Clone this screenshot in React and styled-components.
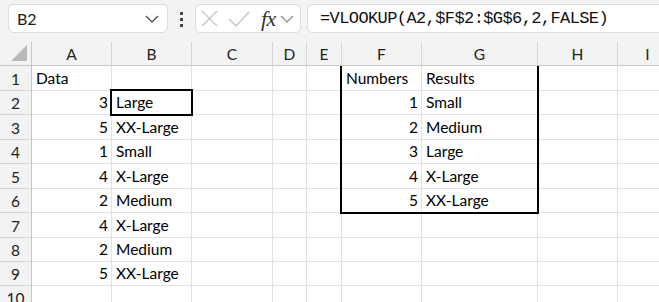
import React from 'react';
import styled, { createGlobalStyle } from 'styled-components';

const GlobalStyle = createGlobalStyle`
    html, body {
        margin: 0;
        padding: 0;
        background: #ffffff;
        overflow: hidden;
    }
    body {
        font-family: Lato, "Noto Sans", sans-serif;
        color: #000;
    }
`;

const COLS = [
    { key: 'A', width: 80 },
    { key: 'B', width: 80 },
    { key: 'C', width: 81 },
    { key: 'D', width: 34 },
    { key: 'E', width: 35 },
    { key: 'F', width: 80 },
    { key: 'G', width: 116 },
    { key: 'H', width: 80 },
    { key: 'I', width: 60 },
];

const ROW_HEIGHTS = [25, 24, 25, 24, 25, 24, 25, 24, 24, 24];

const DATA = {
    1: { A: 'Data', F: 'Numbers', G: 'Results' },
    2: { A: 3, B: 'Large', F: 1, G: 'Small' },
    3: { A: 5, B: 'XX-Large', F: 2, G: 'Medium' },
    4: { A: 1, B: 'Small', F: 3, G: 'Large' },
    5: { A: 4, B: 'X-Large', F: 4, G: 'X-Large' },
    6: { A: 2, B: 'Medium', F: 5, G: 'XX-Large' },
    7: { A: 4, B: 'X-Large' },
    8: { A: 2, B: 'Medium' },
    9: { A: 5, B: 'XX-Large' },
};

const Page = styled.div`
    width: 659px;
    height: 302px;
    display: flex;
    flex-direction: column;
    overflow: hidden;
`;

const Toolbar = styled.div`
    height: 42px;
    flex: none;
    background: #f3f3f3;
    display: flex;
    align-items: flex-start;
    padding: 4px 0 0 8px;
    box-sizing: border-box;
`;

const Box = styled.div`
    height: 29px;
    box-sizing: border-box;
    background: #fff;
    border: 1px solid #dcdcdc;
    border-radius: 5px;
    display: flex;
    align-items: center;
`;

const NameBox = styled(Box)`
    width: 160px;
    padding: 0 8px 0 8px;
    justify-content: space-between;
    font-size: 16px;
    color: #1a1a1a;
`;

const Dots = styled.div`
    width: 27px;
    display: flex;
    flex-direction: column;
    align-items: center;
    gap: 3px;
    padding-top: 8px;
    span {
        width: 3px;
        height: 3px;
        background: #444;
    }
`;

const FxBox = styled(Box)`
    width: 106px;
    padding: 0 0 0 5px;
    gap: 10px;
    .fx {
        font-family: "Liberation Serif", serif;
        font-style: italic;
        font-size: 22px;
        color: #333;
        margin-left: 1px;
        margin-right: -6px;
        line-height: 1;
        letter-spacing: -0.5px;
    }
`;

const FormulaBox = styled(Box)`
    flex: 1;
    margin-left: 6px;
    border-right: none;
    border-radius: 5px 0 0 5px;
    padding-left: 12px;
    font-family: "Liberation Mono", monospace;
    font-size: 17px;
    letter-spacing: -0.6px;
    color: #111;
    white-space: nowrap;
`;

const Sheet = styled.div`
    display: grid;
    grid-template-columns: 32px ${COLS.map((c) => c.width + 'px').join(' ')};
    grid-template-rows: 24px ${ROW_HEIGHTS.map((h) => h + 'px').join(' ')};
    font-size: 15.5px;
`;

const Placed = styled.div`
    grid-column: ${(p) => p.$c};
    grid-row: ${(p) => p.$r};
`;

const HeadCell = styled(Placed)`
    background: #f3f3f3;
    box-sizing: border-box;
    border-right: 1px solid ${(p) => (p.$corner ? '#c6c6c6' : '#d5d5d5')};
    border-bottom: 1px solid #c6c6c6;
    display: flex;
    align-items: center;
    justify-content: center;
    color: #222;
    position: relative;
`;

const RowHead = styled(HeadCell)`
    border-right: 1px solid #c6c6c6;
    border-bottom: 1px solid #d5d5d5;
    padding-top: 1px;
`;

const Cell = styled(Placed)`
    box-sizing: border-box;
    border-right: 1px solid #e1e1e1;
    border-bottom: 1px solid #e1e1e1;
    display: flex;
    align-items: flex-end;
    justify-content: ${(p) => (p.$num ? 'flex-end' : 'flex-start')};
    padding: 0 3px 2px 4px;
    white-space: nowrap;
    line-height: 20px;
`;

const Outline = styled(Placed)`
    border: 2px solid #000;
    margin: -2px -1px -1px -2px;
    pointer-events: none;
    ${(p) => p.$noTop && 'border-top: none; margin-top: 0;'}
`;

const Corner = () => (
    <svg width="16" height="16" viewBox="0 0 16 16" style={{ position: 'absolute', right: 4, bottom: 4 }}>
        <polygon points="16,0 16,16 0,16" fill="#b9b9b9" />
    </svg>
);

const Chevron = ({ color = '#444' }) => (
    <svg width="14" height="8" viewBox="0 0 14 8">
        <polyline points="1,1 7,7 13,1" fill="none" stroke={color} strokeWidth="1.2" />
    </svg>
);

const Cross = () => (
    <svg width="17" height="17" viewBox="0 0 17 17">
        <path d="M1 1 L16 16 M16 1 L1 16" stroke="#c4c4c4" strokeWidth="1.3" />
    </svg>
);

const Check = () => (
    <svg width="22" height="16" viewBox="0 0 22 16">
        <polyline points="1,8 8,15 21,1" fill="none" stroke="#c4c4c4" strokeWidth="1.3" />
    </svg>
);

const App = () => {
    return (
        <Page>
            <GlobalStyle />
            <Toolbar>
                <NameBox>
                    <span>B2</span>
                    <Chevron />
                </NameBox>
                <Dots>
                    <span />
                    <span />
                    <span />
                </Dots>
                <FxBox>
                    <Cross />
                    <Check />
                    <span className="fx">fx</span>
                    <Chevron color="#888" />
                </FxBox>
                <FormulaBox>=VLOOKUP(A2,$F$2:$G$6,2,FALSE)</FormulaBox>
            </Toolbar>
            <Sheet>
                <HeadCell $corner $c={1} $r={1}>
                    <Corner />
                </HeadCell>
                {COLS.map((c, ci) => (
                    <HeadCell key={c.key} $c={ci + 2} $r={1}>
                        {c.key}
                    </HeadCell>
                ))}
                {ROW_HEIGHTS.map((_, i) => {
                    const r = i + 1;
                    const row = DATA[r] || {};
                    return (
                        <React.Fragment key={r}>
                            <RowHead $c={1} $r={r + 1}>
                                {r}
                            </RowHead>
                            {COLS.map((c, ci) => {
                                const v = row[c.key];
                                return (
                                    <Cell key={c.key} $c={ci + 2} $r={r + 1} $num={typeof v === 'number'}>
                                        {v}
                                    </Cell>
                                );
                            })}
                        </React.Fragment>
                    );
                })}
                <Outline $c="7 / 9" $r="2 / 8" $noTop />
                <Outline $c="3" $r="3" />
            </Sheet>
        </Page>
    );
};

export default App;
